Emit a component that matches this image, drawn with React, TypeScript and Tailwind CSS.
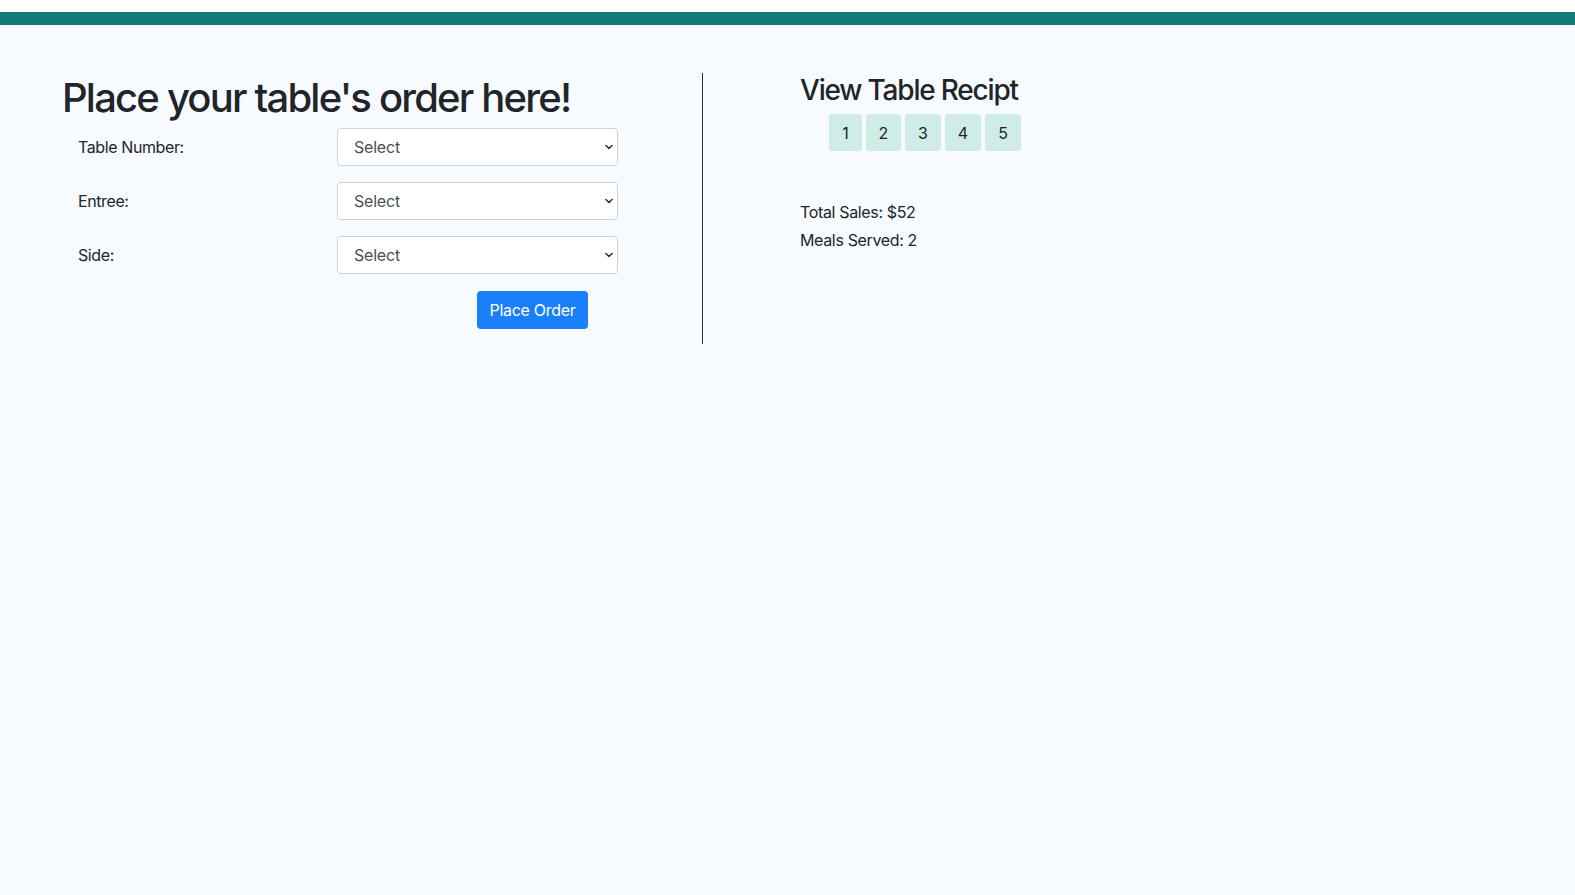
import React from "react";

const fields = ["Table Number:", "Entree:", "Side:"];
const tables = [
  { n: 1, w: "w-[33px]" },
  { n: 2, w: "w-[35px]" },
  { n: 3, w: "w-[36px]" },
  { n: 4, w: "w-[36px]" },
  { n: 5, w: "w-[36px]" },
];

function Chevron() {
  return (
    <svg
      className="pointer-events-none absolute right-[4px] top-1/2 -translate-y-1/2"
      width="10"
      height="10"
      viewBox="0 0 10 10"
    >
      <path d="M2 3.5 L5 6.5 L8 3.5" fill="none" stroke="#333" strokeWidth="1.6" strokeLinecap="round" strokeLinejoin="round" />
    </svg>
  );
}

function OrderForm() {
  return (
    <div className="w-[703px] h-[271px] border-r border-[#333] pl-[62px]">
      <h1 className="text-[40px] leading-[48px] font-medium tracking-[-1.8px] mt-[1px] -mb-[2px]">
        Place your table's order here!
      </h1>
      <form className="mt-[8px] pl-[16px]">
        {fields.map((field, i) => (
          <div key={i} className="flex items-center mb-[16px]">
            <label className="w-[259px] text-[16px] tracking-[-0.4px]">{field}</label>
            <div className="relative">
              <select className="w-[281px] h-[38px] appearance-none rounded-[4px] border border-[#ced4da] bg-white pl-[16px] text-[16px] text-[#495057] tracking-[-0.2px]">
                <option>Select</option>
              </select>
              <Chevron />
            </div>
          </div>
        ))}
        <button
          type="button"
          className="ml-[399px] mt-[1px] h-[38px] w-[111px] rounded-[4px] bg-[#1a7ffb] text-[16px] text-white tracking-[-0.3px]"
        >
          Place Order
        </button>
      </form>
    </div>
  );
}

function Receipts() {
  return (
    <div className="pl-[97px]">
      <h3 className="text-[28px] leading-[34px] font-medium tracking-[-1.2px]">View Table Recipt</h3>
      <div className="mt-[7px] ml-[29px] flex gap-[4px]">
        {tables.map((t) => (
          <button
            key={t.n}
            type="button"
            className={`h-[37px] ${t.w} rounded-[3px] bg-[#d0ece6] text-[16px] text-[#212529]`}
          >
            {t.n}
          </button>
        ))}
      </div>
      <div className="mt-[47px] text-[16px] leading-[28px] tracking-[-0.35px]">
        <p>Total Sales: $52</p>
        <p>Meals Served: 2</p>
      </div>
    </div>
  );
}

export default function App() {
  return (
    <div className="min-h-screen bg-[#f7faff] font-['Inter',sans-serif] text-[#212529]">
      <div className="h-[12px] bg-white" />
      <div className="h-[13px] bg-[#137b77]" />
      <div className="flex pt-[48px]">
        <OrderForm />
        <Receipts />
      </div>
    </div>
  );
}
